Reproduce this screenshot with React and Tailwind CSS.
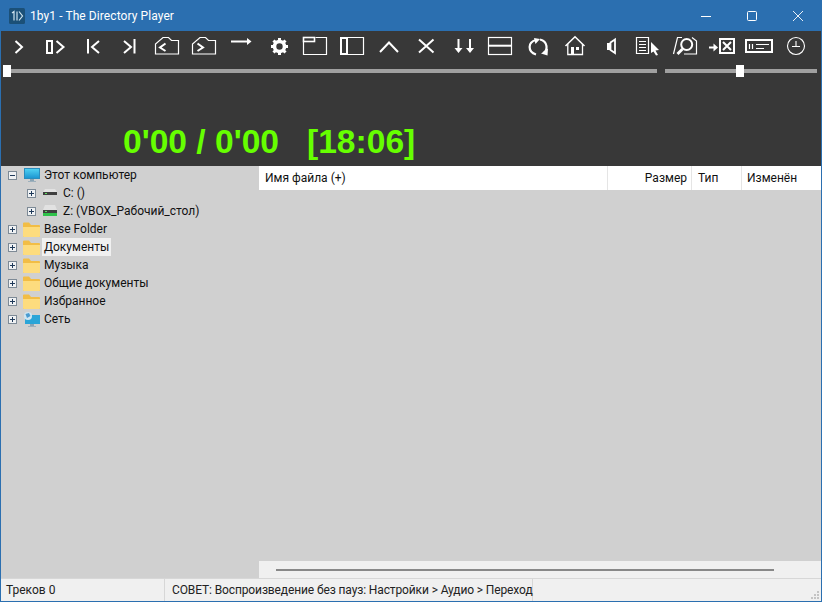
const font = { fontFamily: 'Roboto, sans-serif' };

// toolbar icons, drawn in window coordinates
const toolIcons = [
  <path d="M15.5 41 L22 47 L15.5 53" />,
  <>
    <rect x="47" y="41" width="5" height="12" />
    <path d="M56.5 41 L63.5 47 L56.5 53" />
  </>,
  <path d="M88 39 V53.5 M99 41 L92 47 L99 53" />,
  <path d="M124 41 L131 47 L124 53 M134.5 39 V53.5" />,
  <g strokeWidth="1.2">
    <path d="M155.5 54 V44 L163 37.5 H168.5 L171.5 40.5 H178.5 V54 Z" />
    <path d="M165.5 43.5 L160 47.5 L165.5 51" strokeWidth="2" />
  </g>,
  <g strokeWidth="1.2">
    <path d="M192.5 54 V44 L200 37.5 H205.5 L208.5 40.5 H215.5 V54 Z" />
    <path d="M197.5 43.5 L203 47.5 L197.5 51" strokeWidth="2" />
  </g>,
  <>
    <path d="M231 41.5 H248" />
    <path d="M247 38 L251.5 41.5 L247 45 Z" fill="#fff" stroke="none" />
  </>,
  <>
    <circle cx="279.5" cy="46.5" r="5" strokeWidth="3.6" />
    <path d="M279.5 38 V55 M271 46.5 H288 M273.5 40.5 L285.5 52.5 M285.5 40.5 L273.5 52.5" strokeWidth="3" strokeDasharray="3.4 10.2" />
  </>,
  <g strokeWidth="1.2">
    <rect x="303.5" y="37.5" width="11" height="4" strokeWidth="1.6" />
    <path d="M303.5 41.5 V54.5 H326.5 V37.5 H315.5" />
  </g>,
  <g strokeWidth="1.2">
    <rect x="341" y="38" width="6" height="16" strokeWidth="2" />
    <path d="M347 37.5 H363.5 V54.5 H347" />
  </g>,
  <path d="M380 52 L389 42.5 L398 52" />,
  <path d="M419 39.5 L433.5 52.5 M433.5 39.5 L419 52.5" />,
  <>
    <path d="M458.5 39 V50 M470 39 V50" />
    <path d="M454.5 48 H462.5 L458.5 53 Z M466 48 H474 L470 53 Z" fill="#fff" stroke="none" />
  </>,
  <g strokeWidth="1.2">
    <rect x="488.5" y="37.5" width="23" height="17" />
    <path d="M488.5 45.7 H511.5" strokeWidth="2" />
  </g>,
  <>
    <path d="M536 40 C527.5 42 527.5 52 536 54.5" strokeWidth="2.2" />
    <path d="M540 39.5 C548 41.5 548 50 543.5 53" strokeWidth="2.2" />
    <path d="M534 38 L540 39 L535.5 44 Z M548 48.5 L547.5 55.5 L541 53.5 Z" fill="#fff" stroke="none" />
  </>,
  <g strokeWidth="1.3">
    <path d="M565.5 46 L575 36.8 L584.5 46" strokeWidth="1.6" />
    <path d="M567.8 44 V54.5 H582.5 V44" />
    <rect x="571" y="47" width="3" height="7.5" fill="#fff" stroke="none" />
    <rect x="576" y="47" width="3" height="3" fill="#fff" stroke="none" />
  </g>,
  <>
    <rect x="607" y="43" width="3.5" height="7" fill="#fff" stroke="none" />
    <path d="M610.5 42.5 L615 39.5 V53 L610.5 50 Z" strokeWidth="1.8" />
  </>,
  <g strokeWidth="1.2">
    <path d="M636.5 37.5 H648.5 V53.5 H636.5 Z" />
    <path d="M639 41.5 H646 M639 44.5 H646 M639 47.5 H646 M639 50.5 H646" />
    <path d="M651 42 L659 50 L655.5 50.5 L658 55 L656 55.5 L653.5 51.5 L651 53 Z" fill="#fff" stroke="none" />
  </g>,
  <g strokeWidth="1.2">
    <path d="M673.5 54 L677.5 37.5 H682 M692 37.5 L696.5 41 V54 H684" />
    <circle cx="686.7" cy="44.5" r="5.5" strokeWidth="2" />
    <path d="M682.5 49 L677.5 54" strokeWidth="2.8" />
  </g>,
  <>
    <path d="M709 47.5 H714" />
    <path d="M713.5 43.5 L718 47.5 L713.5 51.5 Z" fill="#fff" stroke="none" />
    <rect x="720" y="39" width="14" height="14" />
    <path d="M723 42 L731 50 M731 42 L723 50" />
  </>,
  <g strokeWidth="1.2">
    <rect x="746" y="40" width="26" height="12" strokeWidth="2" />
    <path d="M749.5 44 V49 M752.5 44 V49 M756 44.5 H769 M756 48.5 H764" />
  </g>,
  <g strokeWidth="1.1">
    <circle cx="796" cy="46" r="8.5" />
    <path d="M796 41 V46 M792 46.5 H800" />
  </g>,
];

function Toolbar() {
  return (
    <div className="flex h-[30px]">
      {toolIcons.map((icon, i) => (
        <svg
          key={i}
          width="37"
          height="30"
          viewBox={`${1 + i * 37} 31 37 30`}
          fill="none"
          stroke="#fff"
          strokeWidth="2"
          className="shrink-0 overflow-visible"
        >
          {icon}
        </svg>
      ))}
    </div>
  );
}

function Slider({ className, thumb }) {
  return (
    <div className={`relative h-[4px] bg-[#a0a0a0] ${className}`}>
      <div className={`absolute top-[-4px] h-[12px] w-[8px] bg-white ${thumb}`} />
    </div>
  );
}

const Expander = ({ open }) => (
  <svg width="9" height="9" viewBox="0 0 9 9" className="shrink-0">
    <rect x="0.5" y="0.5" width="8" height="8" fill="#f0f2f4" stroke="#7d8a96" />
    <path d={open ? "M2 4.5 H7" : "M2 4.5 H7 M4.5 2 V7"} stroke="#1f3a5a" />
  </svg>
);

const Folder = () => (
  <svg width="17" height="15" viewBox="0 0 17 15" className="shrink-0">
    <path d="M0 1.5 Q0 0.5 1 0.5 H6 L8 3 H16 Q17 3 17 4 V14 Q17 15 16 15 H1 Q0 15 0 14 Z" fill="#f2bd45" />
    <path d="M0 5 H17 V14 Q17 15 16 15 H1 Q0 15 0 14 Z" fill="#fddc7e" />
  </svg>
);

const Monitor = () => (
  <svg width="16" height="15" viewBox="0 0 16 15" className="shrink-0">
    <defs>
      <linearGradient id="screen" x1="0" y1="0" x2="0" y2="1">
        <stop offset="0" stopColor="#4fd0f2" />
        <stop offset="1" stopColor="#1d97d2" />
      </linearGradient>
    </defs>
    <rect x="0" y="0" width="16" height="11" fill="#2a8dbd" />
    <rect x="1" y="1" width="14" height="9" fill="url(#screen)" />
    <rect x="6" y="11" width="4" height="2" fill="#8aa4b4" />
    <rect x="4" y="13" width="8" height="1" fill="#9db0bc" />
  </svg>
);

const Drive = ({ green }) => (
  <svg width="14" height="12" viewBox="0 0 14 12" className="shrink-0">
    <path d={green ? "M2 0 H12 L14 5 H0 Z" : "M2 2 H12 L14 5 H0 Z"} fill="#e2e2e2" />
    <rect x="0" y="5" width="14" height="3" fill="#3f3f3f" />
    <rect x="2" y="6" width="2" height="1" fill="#5fe05f" />
    {green && <rect x="0" y="8" width="14" height="3" fill="#2fc24a" />}
  </svg>
);

const Network = () => (
  <svg width="17" height="15" viewBox="0 0 17 15" className="shrink-0">
    <rect x="2" y="3" width="15" height="9" fill="#2aa5d8" />
    <rect x="7" y="12" width="4" height="2" fill="#8aa4b4" />
    <rect x="5" y="14" width="8" height="1" fill="#9db0bc" />
    <circle cx="5" cy="4" r="4" fill="#cfe6f2" />
    <path d="M2.5 2 L6 1 L7.5 4 L4 6 Z" fill="#4a9bd0" />
  </svg>
);

function TreeRow({ indent, open, icon, label, hover }) {
  return (
    <div className={`flex h-[18px] items-center ${indent ? "pl-[26px]" : "pl-[7px]"}`}>
      <Expander open={open} />
      <span className={`flex items-center justify-center ${indent ? "ml-[7px] w-[14px]" : "ml-[6px] w-[17px]"}`}>{icon}</span>
      <span className={`flex h-[18px] items-center px-[2px] text-[12px] text-[#111] ${indent ? "ml-[4px]" : "ml-[2px]"} ${hover ? "bg-[#f0f0f0]" : ""}`}>{label}</span>
    </div>
  );
}

export default function App() {
  return (
    <div className="flex h-[602px] w-[822px] flex-col overflow-hidden bg-[#2b6fb0] px-px pb-px" style={font}>
      {/* title bar */}
      <div className="flex h-[31px] shrink-0 items-center text-white">
        <svg width="16" height="16" viewBox="0 0 16 16" className="ml-[8px] shrink-0">
          <rect width="16" height="16" rx="1.5" fill="#1b5078" />
          <path d="M3 5 L5 3.5 V12.5 M8 3.5 V12.5 M10 3.5 L13.5 8 L10 12.5" stroke="#cfe3ee" strokeWidth="1.2" fill="none" />
        </svg>
        <span className="ml-[5px] text-[12px] tracking-[0.08px]">1by1 - The Directory Player</span>
        <div className="ml-auto flex items-center">
          <span className="flex w-[46px] justify-center">
            <svg width="10" height="10" viewBox="0 0 10 10" stroke="#fff"><path d="M0 5.5 H10" /></svg>
          </span>
          <span className="flex w-[46px] justify-center">
            <svg width="10" height="10" viewBox="0 0 10 10" stroke="#fff" fill="none"><rect x="0.5" y="0.5" width="9" height="9" rx="1" /></svg>
          </span>
          <span className="flex w-[46px] justify-center">
            <svg width="10" height="10" viewBox="0 0 10 10" stroke="#fff" strokeWidth="0.9"><path d="M0 0 L10 10 M10 0 L0 10" /></svg>
          </span>
        </div>
      </div>

      {/* player panel */}
      <div className="h-[135px] shrink-0 bg-[#383838]">
        <Toolbar />
        <div className="mt-[8px] flex pl-[5px]">
          <Slider className="w-[651px]" thumb="left-[-3px]" />
          <Slider className="ml-[8px] w-[152px]" thumb="left-[71px]" />
        </div>
        <div className="mt-[49px] whitespace-pre pl-[122px] text-[33.6px] font-bold leading-[40px] text-[#66ff00]" style={{ fontFamily: '"Liberation Sans", sans-serif' }}>
          0'00 / 0'00{"   "}[18:06]
        </div>
      </div>

      {/* tree + file list */}
      <div className="flex min-h-0 flex-1 bg-[#d0d0d0]">
        <div className="w-[258px] shrink-0">
          <TreeRow open icon={<Monitor />} label="Этот компьютер" />
          <TreeRow indent icon={<Drive />} label="C: ()" />
          <TreeRow indent icon={<Drive green />} label="Z: (VBOX_Рабочий_стол)" />
          <TreeRow icon={<Folder />} label="Base Folder" />
          <TreeRow icon={<Folder />} label="Документы" hover />
          <TreeRow icon={<Folder />} label="Музыка" />
          <TreeRow icon={<Folder />} label="Общие документы" />
          <TreeRow icon={<Folder />} label="Избранное" />
          <TreeRow icon={<Network />} label="Сеть" />
        </div>
        <div className="flex min-w-0 flex-1 flex-col">
          <div className="flex h-[24px] shrink-0 items-center bg-white text-[12px] text-[#111]">
            <div className="h-full w-[349px] border-r border-[#e5e5e5] pl-[6px] leading-[24px]">Имя файла (+)</div>
            <div className="h-full w-[84px] border-r border-[#e5e5e5] pr-[4px] text-right leading-[24px]">Размер</div>
            <div className="h-full w-[50px] border-r border-[#e5e5e5] pl-[6px] leading-[24px]">Тип</div>
            <div className="h-full flex-1 pl-[5px] leading-[24px]">Изменён</div>
          </div>
          <div className="flex-1" />
          <div className="flex h-[17px] shrink-0 items-center bg-[#f0f0f0] pl-[17px]">
            <div className="h-[2px] w-[498px] bg-[#888888]" />
          </div>
        </div>
      </div>

      {/* status bar */}
      <div className="relative flex h-[23px] shrink-0 items-center border-t border-[#d7d7d7] bg-[#f0f0f0] text-[12px] text-[#222]">
        <div className="h-full w-[164px] border-r border-[#d7d7d7] pl-[5px] leading-[22px]">Треков 0</div>
        <div className="h-full w-[368px] whitespace-nowrap border-r border-[#d7d7d7] pl-[7px] leading-[22px] tracking-[-0.12px]">
          СОВЕТ: Воспроизведение без пауз: Настройки &gt; Аудио &gt; Переход
        </div>
        <svg width="10" height="10" viewBox="0 0 10 10" className="absolute bottom-0 right-[1px]" fill="#c4c4c4">
          <rect x="7" y="0" width="2" height="2" />
          <rect x="4" y="3" width="2" height="2" />
          <rect x="7" y="3" width="2" height="2" />
          <rect x="1" y="6" width="2" height="2" />
          <rect x="4" y="6" width="2" height="2" />
          <rect x="7" y="6" width="2" height="2" />
        </svg>
      </div>
    </div>
  );
}
